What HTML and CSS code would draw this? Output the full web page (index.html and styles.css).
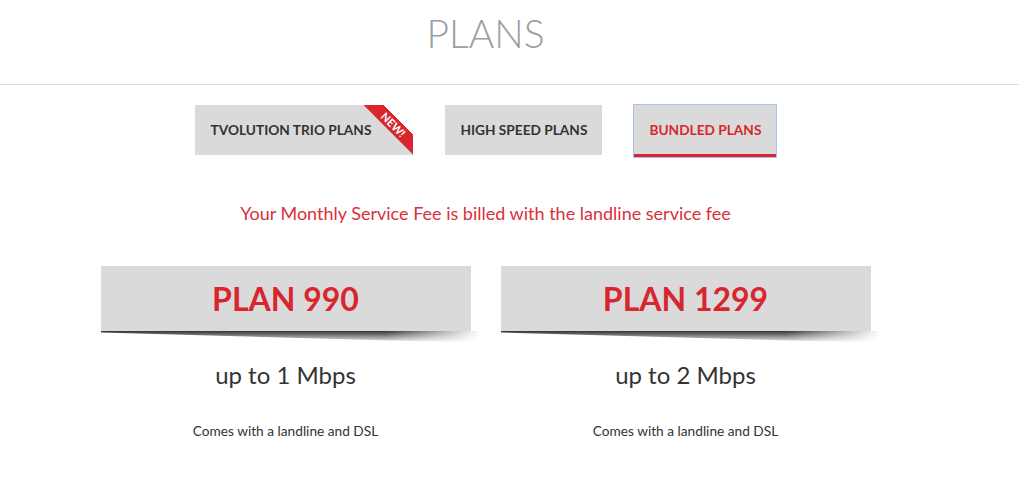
FILE: index.html
```html
<!DOCTYPE html>
<html lang="en">
<head>
    <meta charset="UTF-8">
    <meta name="viewport" content="width=device-width, initial-scale=1.0">
    <title>Plans</title>
    <link rel="stylesheet" href="styles.css">
</head>
<body>
    <header class="page-head">
        <h1>PLANS</h1>
    </header>

    <div class="container">
        <nav class="tabs">
            <a class="tab tab-new" href="#">TVOLUTION TRIO PLANS<span class="ribbon">NEW!</span></a>
            <a class="tab" href="#">HIGH SPEED PLANS</a>
            <a class="tab active" href="#">BUNDLED PLANS</a>
        </nav>

        <p class="notice">Your Monthly Service Fee is billed with the landline service fee</p>

        <div class="plans">
            <div class="plan">
                <div class="plan-name">PLAN 990</div>
                <div class="plan-speed">up to 1 Mbps</div>
                <div class="plan-note">Comes with a landline and DSL</div>
            </div>
            <div class="plan">
                <div class="plan-name">PLAN 1299</div>
                <div class="plan-speed">up to 2 Mbps</div>
                <div class="plan-note">Comes with a landline and DSL</div>
            </div>
        </div>
    </div>
</body>
</html>
```

FILE: styles.css
```css
body {
    font-family: Lato, "Open Sans", sans-serif;
    margin: 0;
    padding: 0;
    background-color: #fff;
    color: #333;
}
.page-head {
    margin-right: 5px;
    border-bottom: 1px solid #ddd;
    text-align: center;
    padding-right: 48px;
}
.page-head h1 {
    margin: 0;
    padding: 9px 0 27px;
    font-size: 39px;
    line-height: 48px;
    font-weight: 300;
    color: #9d9da3;
}
.container {
    width: 971px;
    text-align: center;
}
.tabs {
    display: flex;
    justify-content: center;
    align-items: flex-start;
    gap: 32px;
    margin-top: 20px;
    height: 52px;
}
.tab {
    position: relative;
    overflow: hidden;
    display: block;
    padding: 0 15px;
    height: 50px;
    line-height: 50px;
    background-color: #dadada;
    color: #333;
    font-size: 13.7px;
    font-weight: 700;
    text-decoration: none;
}
.tab-new {
    padding: 0 42px 0 16px;
}
.tab.active {
    color: #d7262e;
    height: 49px;
    line-height: 49px;
    border-bottom: 3px solid #d7262e;
    box-shadow: 0 0 0 1px #a5c2f2;
}
/* white corner + red band, turned 45deg */
.ribbon {
    position: absolute;
    top: -6px;
    right: -38px;
    width: 100px;
    height: 14px;
    padding-top: 22px;
    line-height: 14px;
    background: linear-gradient(to bottom, #fff 22px, #d7262e 22px);
    color: #fff;
    font-size: 11px;
    font-weight: 700;
    text-align: center;
    transform: rotate(45deg);
}
.notice {
    margin: 45px 0 0;
    font-size: 18px;
    line-height: 22px;
    color: #d9303a;
}
.plans {
    display: flex;
    justify-content: center;
    gap: 30px;
    margin-top: 42px;
}
.plan {
    width: 370px;
}
.plan-name {
    position: relative;
    height: 65px;
    line-height: 65px;
    background-color: #dadada;
    color: #d7262e;
    font-size: 32px;
    font-weight: 700;
}
.plan-name::after {
    content: "";
    position: absolute;
    top: 100%;
    left: 0;
    width: 380px;
    height: 12px;
    background: linear-gradient(to bottom, rgba(0, 0, 0, 0.8), rgba(0, 0, 0, 0));
    clip-path: polygon(0 0, 100% 0, 100% 100%, 0 12%);
    -webkit-mask-image: linear-gradient(to right, #000 0, #000 75%, transparent 100%);
}
.plan-speed {
    margin-top: 29px;
    font-size: 24px;
    line-height: 29px;
}
.plan-note {
    margin-top: 33px;
    font-size: 13.7px;
    line-height: 17px;
}
```
